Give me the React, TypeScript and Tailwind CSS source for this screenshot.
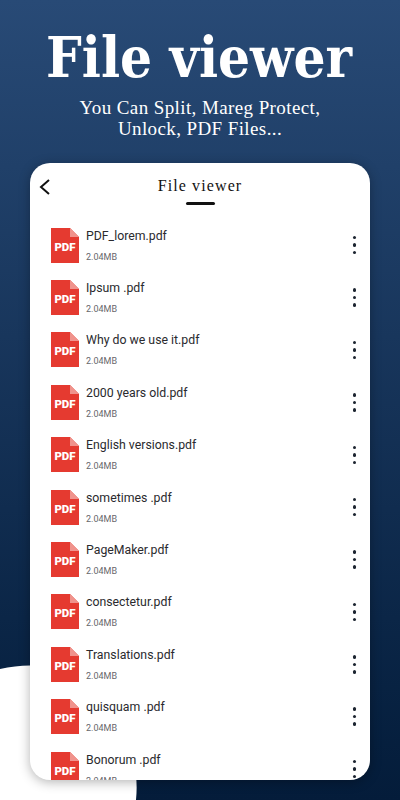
const files = [
  "PDF_lorem.pdf",
  "Ipsum .pdf",
  "Why do we use it.pdf",
  "2000 years old.pdf",
  "English versions.pdf",
  "sometimes .pdf",
  "PageMaker.pdf",
  "consectetur.pdf",
  "Translations.pdf",
  "quisquam .pdf",
  "Bonorum .pdf",
];

function PdfIcon() {
  return (
    <div className="relative h-[35px] w-[28px] shrink-0">
      <svg viewBox="0 0 28 35" className="absolute inset-0 h-full w-full">
        <path d="M0 0H19L28 9V35H0Z" fill="#e53a30" />
        <path d="M19 0L28 9H19Z" fill="#f0938c" />
      </svg>
      <span className="absolute inset-x-0 top-[12px] text-center font-['Roboto',sans-serif] text-[11.5px] leading-[14px] font-black text-white">
        PDF
      </span>
    </div>
  );
}

function Dots() {
  return (
    <div className="flex shrink-0 flex-col gap-[4px]">
      <span className="h-[3.5px] w-[3.5px] rounded-full bg-[#1c2430]" />
      <span className="h-[3.5px] w-[3.5px] rounded-full bg-[#1c2430]" />
      <span className="h-[3.5px] w-[3.5px] rounded-full bg-[#1c2430]" />
    </div>
  );
}

function Row({ name }: { name: string }) {
  return (
    <div className="flex h-[52.4px] shrink-0 items-center pr-[14px] pl-[21px]">
      <PdfIcon />
      <div className="ml-[7px] flex min-w-0 flex-1 flex-col font-['Roboto',sans-serif]">
        <span className="text-[12.3px] leading-[16px] text-[#2a2a2e]">{name}</span>
        <span className="mt-[7px] text-[9px] leading-[12px] text-[#66666b]">2.04MB</span>
      </div>
      <Dots />
    </div>
  );
}

export default function App() {
  return (
    <div className="relative flex h-[800px] w-[400px] flex-col items-center overflow-hidden bg-gradient-to-b from-[#284a76] to-[#041c3a]">
      <svg viewBox="0 0 400 800" className="absolute inset-0 h-full w-full">
        <path d="M0 669C40 660 80 668 100 700C125 735 140 760 136 800H0Z" fill="#ffffff" />
      </svg>
      <h1 className="relative mt-[24px] -translate-x-[1px] font-['DejaVu_Serif_Condensed','DejaVu_Serif',serif] text-[56px] leading-[66px] font-bold text-white [font-stretch:condensed]">
        File viewer
      </h1>
      <p className="relative mt-[7px] text-center font-['Liberation_Serif',serif] text-[19px] leading-[21px] tracking-[0.4px] text-white">
        You Can Split, Mareg Protect,
        <br />
        Unlock, PDF Files...
      </p>
      <div className="relative mt-[24px] flex h-[617px] w-[340px] flex-col overflow-hidden rounded-[20px] bg-white shadow-[0_2px_12px_rgba(0,0,0,0.3)]">
        <div className="relative flex h-[56px] shrink-0 flex-col items-center">
          <svg viewBox="0 0 12 16" className="absolute top-[16px] left-[9px] h-[16px] w-[12px]" fill="none" stroke="#111" strokeWidth="2">
            <path d="M10 1L2 8L10 15" />
          </svg>
          <span className="mt-[13px] font-['Liberation_Serif',serif] text-[16px] leading-[20px] tracking-[1.1px] text-[#111]">
            File viewer
          </span>
          <span className="mt-[6px] h-[3px] w-[29px] rounded-full bg-[#111]" />
        </div>
        <div className="flex flex-col">
          {files.map((f) => (
            <Row key={f} name={f} />
          ))}
        </div>
      </div>
    </div>
  );
}
